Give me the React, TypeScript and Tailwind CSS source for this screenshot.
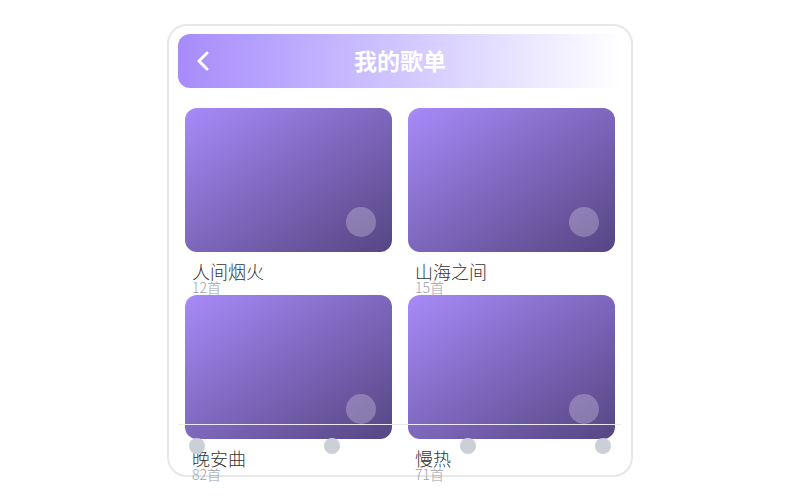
import React from "react";

const lists = [
  { name: "人间烟火", count: "12首" },
  { name: "山海之间", count: "15首" },
  { name: "晚安曲", count: "82首" },
  { name: "慢热", count: "71首" },
];

function Card({ name, count }: { name: string; count: string }) {
  return (
    <div className="flex flex-col">
      <div className="relative h-[144px] w-[207px] rounded-[12px] bg-gradient-to-br from-[#a78bfa] to-[#564683]">
        <div className="absolute bottom-[15px] right-[16px] h-[30px] w-[30px] rounded-full bg-white/25" />
      </div>
      <div className="mt-[10px] pl-[7px] text-[18px] font-light leading-[18px] text-[#333333]">{name}</div>
      <div className="pl-[7px] text-[14px] font-light leading-[14px] text-[#9ca3af]">{count}</div>
    </div>
  );
}

export default function App() {
  return (
    <div
      className="flex h-[500px] w-[800px] justify-center bg-white pt-[24px]"
      style={{ fontFamily: "'Noto Sans CJK SC', 'Noto Sans', sans-serif" }}
    >
      <div className="relative h-[453px] w-[466px] rounded-[20px] border-2 border-[#e5e7eb] bg-white px-[9px] pt-[8px]">
        <div className="relative flex h-[54px] items-center justify-center rounded-[12px] bg-gradient-to-r from-[#a78bfa] to-[#ffffff]">
          <svg
            className="absolute left-[18px] top-[17px]"
            width="14"
            height="20"
            viewBox="0 0 14 20"
            fill="none"
            stroke="white"
            strokeWidth="3"
            strokeLinecap="round"
            strokeLinejoin="round"
          >
            <path d="M11 2 L3 10 L11 18" />
          </svg>
          <span className="-mt-[1px] text-[23px] font-bold leading-none text-white">我的歌单</span>
        </div>
        <div className="mt-[20px] grid grid-cols-2 gap-x-[16px] gap-y-[1px] px-[7px]">
          {lists.map((l) => (
            <Card key={l.name} name={l.name} count={l.count} />
          ))}
        </div>
        <div className="absolute left-[9px] right-[9px] top-[398px] h-px bg-[#e9e9ee]" />
        <div className="absolute left-[20px] right-[20px] top-[412px] flex justify-between">
          <div className="h-4 w-4 rounded-full bg-[#cbd0d6]" />
          <div className="h-4 w-4 rounded-full bg-[#cbd0d6]" />
          <div className="h-4 w-4 rounded-full bg-[#cbd0d6]" />
          <div className="h-4 w-4 rounded-full bg-[#cbd0d6]" />
        </div>
      </div>
    </div>
  );
}
